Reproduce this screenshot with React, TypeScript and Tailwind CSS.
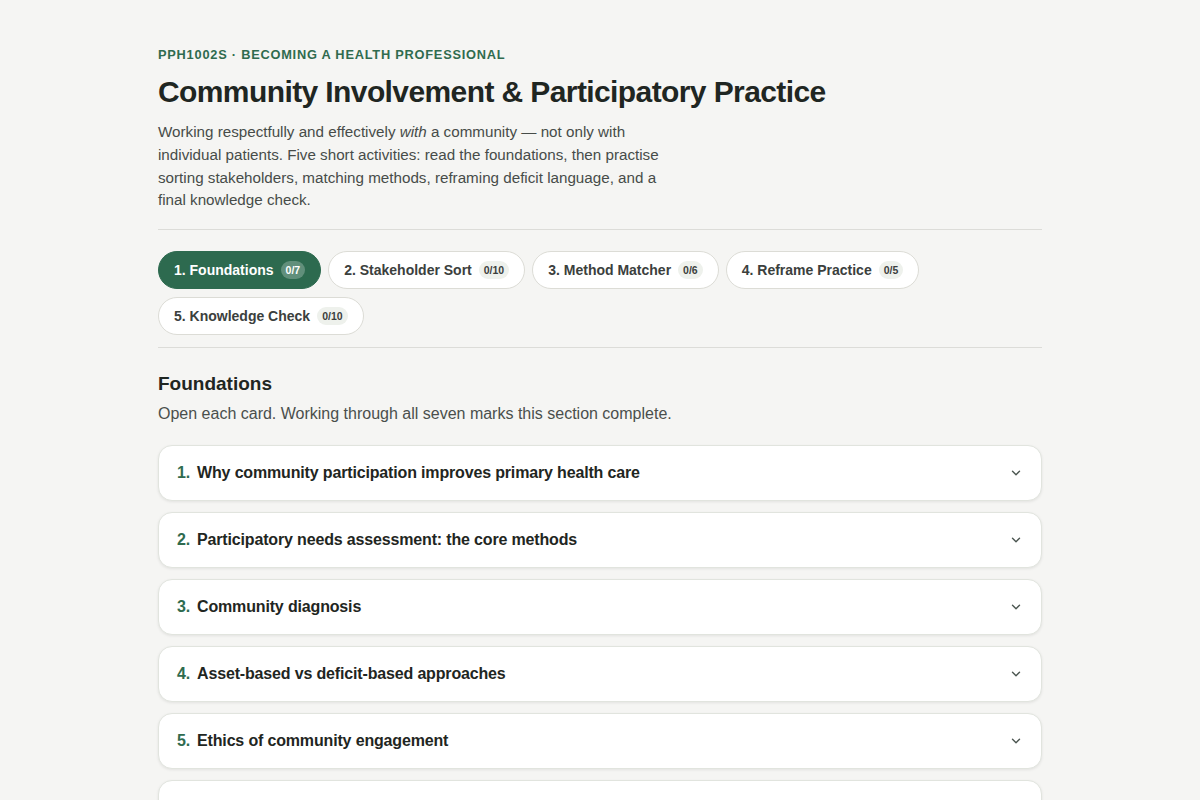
import React from "react";

const tabs = [
  { label: "1. Foundations", count: "0/7", active: true },
  { label: "2. Stakeholder Sort", count: "0/10" },
  { label: "3. Method Matcher", count: "0/6" },
  { label: "4. Reframe Practice", count: "0/5" },
  { label: "5. Knowledge Check", count: "0/10" },
];

const cards = [
  "Why community participation improves primary health care",
  "Participatory needs assessment: the core methods",
  "Community diagnosis",
  "Asset-based vs deficit-based approaches",
  "Ethics of community engagement",
  "Power, trust and representation",
  "Sustaining participation over time",
];

function Chevron() {
  return (
    <svg width="14" height="14" viewBox="0 0 24 24" fill="none" stroke="#4b5550" strokeWidth="2.4" strokeLinecap="round" strokeLinejoin="round">
      <path d="M6 9l6 6 6-6" />
    </svg>
  );
}

export default function App() {
  return (
    <div className="min-h-screen bg-[#f5f5f3] text-[#1f2622]" style={{ fontFamily: '"Liberation Sans", Arial, sans-serif' }}>
      <div className="mx-auto w-[884px] pt-[47px] pb-10">
        <div className="text-[12.8px] font-bold uppercase tracking-[0.06em] text-[#2f6b4f] leading-[16px]">
          PPH1002S · Becoming a Health Professional
        </div>
        <h1 className="mt-[11px] text-[30px] font-bold leading-[36px] tracking-[-0.02em] text-[#1f2622]">
          Community Involvement &amp; Participatory Practice
        </h1>
        <p className="mt-[11px] w-[520px] text-[15.2px] leading-[22.8px] text-[#474c49]">
          Working respectfully and effectively <em>with</em> a community — not only with individual patients. Five short activities: read the foundations, then practise sorting stakeholders, matching methods, reframing deficit language, and a final knowledge check.
        </p>
        <div className="mt-[17px] h-px bg-[#dcdcd8]" />
        <div className="mt-[21px] flex flex-wrap gap-x-[7px] gap-y-[8px]">
          {tabs.map((t) => (
            <div
              key={t.label}
              className={
                t.active
                  ? "flex h-[38px] items-center gap-[7px] rounded-full border border-[#2d6a4f] bg-[#2d6a4f] px-[15px] text-[14px] font-bold text-white"
                  : "flex h-[38px] items-center gap-[7px] rounded-full border border-[#dcdcd6] bg-white px-[15px] text-[14px] font-bold text-[#3b403d]"
              }
            >
              <span>{t.label}</span>
              <span
                className={
                  t.active
                    ? "rounded-full bg-white/25 px-[5px] py-[3px] text-[10.5px] font-bold leading-[12px] text-white"
                    : "rounded-full bg-[#eef1ec] px-[5px] py-[3px] text-[10.5px] font-bold leading-[12px] text-[#3b403d]"
                }
              >
                {t.count}
              </span>
            </div>
          ))}
        </div>
        <div className="mt-[12px] h-px bg-[#dcdcd8]" />
        <h2 className="mt-[25px] text-[19px] font-bold leading-[22px] text-[#1f2622]">Foundations</h2>
        <p className="mt-[9px] text-[16px] leading-[20px] text-[#4a4f4c]">
          Open each card. Working through all seven marks this section complete.
        </p>
        <div className="mt-[21px] flex flex-col gap-[11px]">
          {cards.map((c, i) => (
            <div
              key={c}
              className="flex h-[56px] items-center justify-between rounded-[14px] border border-[#e1e4de] bg-white pl-[18px] pr-[18px] shadow-[0_1px_3px_rgba(0,0,0,0.08)]"
            >
              <div className="flex items-center gap-[7px] text-[16px] font-bold tracking-[-0.01em] text-[#1f2622]">
                <span className="text-[#2f6b4f]">{i + 1}.</span>
                <span>{c}</span>
              </div>
              <Chevron />
            </div>
          ))}
        </div>
      </div>
    </div>
  );
}
